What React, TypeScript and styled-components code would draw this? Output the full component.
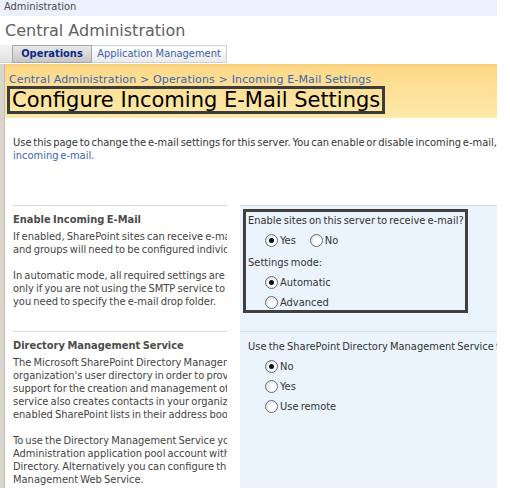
import styled, { createGlobalStyle } from 'styled-components';

const GlobalStyle = createGlobalStyle`
  body {
    margin: 0;
    background: #ffffff;
    font-family: Tahoma, "DejaVu Sans Condensed", "Liberation Sans", sans-serif;
    font-size: 11px;
    word-spacing: -1px;
    color: #333333;
  }
`;

interface RadioOption {
  label: string;
  checked: boolean;
}

const emailOptions: RadioOption[] = [
  { label: 'Yes', checked: true },
  { label: 'No', checked: false },
];

const modeOptions: RadioOption[] = [
  { label: 'Automatic', checked: true },
  { label: 'Advanced', checked: false },
];

const directoryOptions: RadioOption[] = [
  { label: 'No', checked: true },
  { label: 'Yes', checked: false },
  { label: 'Use remote', checked: false },
];

const Radio = ({ label, checked }: RadioOption) => (
  <RadioLabel>
    <RadioCircle $checked={checked} />
    <span>{label}</span>
  </RadioLabel>
);

const App = () => {
  return (
    <>
      <GlobalStyle />
      <Page>
        <TopBar>Administration</TopBar>
        <SiteTitle>Central Administration</SiteTitle>
        <TabRow>
          <TabSpacer />
          <Tab $selected $width={80}>Operations</Tab>
          <Tab $width={135}>Application Management</Tab>
        </TabRow>
        <Body>
          <LeftStrip />
          <Main>
            <PageHeader>
              <Breadcrumb>
                Central Administration &gt; Operations &gt; Incoming E-Mail Settings
              </Breadcrumb>
              <PageTitle>Configure Incoming E-Mail Settings</PageTitle>
            </PageHeader>

            <Description>
              <Line>Use this page to change the e-mail settings for this server. You can enable or disable incoming e-mail,</Line>
              <Line><Link>incoming e-mail.</Link></Line>
            </Description>

            <Section>
              <SectionInfo>
                <SectionHeading>Enable Incoming E-Mail</SectionHeading>
                <Para>
                  <Line>If enabled, SharePoint sites can receive e-mail. Lists and libraries</Line>
                  <Line>and groups will need to be configured individually.</Line>
                </Para>
                <Para>
                  <Line>In automatic mode, all required settings are retrieved. Use advanced mode</Line>
                  <Line>only if you are not using the SMTP service to receive incoming e-mail, or if</Line>
                  <Line>you need to specify the e-mail drop folder.</Line>
                </Para>
              </SectionInfo>
              <SectionControls>
                <MarkedBox>
                  <Prompt>Enable sites on this server to receive e-mail?</Prompt>
                  <RadioRow $inline>
                    {emailOptions.map((o) => (
                      <Radio key={o.label} {...o} />
                    ))}
                  </RadioRow>
                  <Prompt>Settings mode:</Prompt>
                  <RadioRow>
                    {modeOptions.map((o) => (
                      <Radio key={o.label} {...o} />
                    ))}
                  </RadioRow>
                </MarkedBox>
              </SectionControls>
            </Section>

            <Section>
              <SectionInfo>
                <SectionHeading>Directory Management Service</SectionHeading>
                <Para>
                  <Line>The Microsoft SharePoint Directory Management Service connects to your</Line>
                  <Line>organization's user directory in order to provide e-mail address features and</Line>
                  <Line>support for the creation and management of distribution groups. This</Line>
                  <Line>service also creates contacts in your organization's directory so users can find</Line>
                  <Line>enabled SharePoint lists in their address book.</Line>
                </Para>
                <Para>
                  <Line>To use the Directory Management Service you need to provide the Central</Line>
                  <Line>Administration application pool account with write access to the Active</Line>
                  <Line>Directory. Alternatively you can configure this server to use a remote Directory</Line>
                  <Line>Management Web Service.</Line>
                </Para>
              </SectionInfo>
              <SectionControls $open>
                <Prompt>Use the SharePoint Directory Management Service to create distribution groups and contacts?</Prompt>
                <RadioRow>
                  {directoryOptions.map((o) => (
                    <Radio key={o.label} {...o} />
                  ))}
                </RadioRow>
              </SectionControls>
            </Section>
          </Main>
        </Body>
      </Page>
    </>
  );
};

export default App;

const Page = styled.div`
  width: 497px;
  height: 488px;
  overflow: hidden;
  display: flex;
  flex-direction: column;
`;

const TopBar = styled.div`
  height: 16px;
  line-height: 13px;
  padding-left: 4px;
  background: #eaf0fc;
  color: #4c4c4c;
  flex-shrink: 0;
`;

const SiteTitle = styled.div`
  height: 29px;
  line-height: 30px;
  padding-left: 5px;
  font-family: "DejaVu Sans", Verdana, sans-serif;
  font-size: 16px;
  word-spacing: normal;
  color: #606060;
  flex-shrink: 0;
  white-space: nowrap;
`;

const TabRow = styled.div`
  display: flex;
  height: 19px;
  flex-shrink: 0;
`;

const TabSpacer = styled.div`
  width: 12px;
  height: 17px;
  background: linear-gradient(#f3f3f3, #e2e2e2);
  border-bottom: 1px solid #d0d0d0;
`;

const Tab = styled.div<{ $selected?: boolean; $width: number }>`
  box-sizing: border-box;
  width: ${(p) => p.$width}px;
  height: 18px;
  line-height: 16px;
  border: 1px solid ${(p) => (p.$selected ? '#a6a6a6' : '#cfcfcf')};
  border-left-width: ${(p) => (p.$selected ? '1px' : '0')};
  background: ${(p) =>
    p.$selected
      ? 'linear-gradient(#e8e8e8, #c9c7c2)'
      : 'linear-gradient(#ffffff, #ebebeb)'};
  color: ${(p) => (p.$selected ? '#0a2b8c' : '#3a62ad')};
  font-weight: ${(p) => (p.$selected ? 'bold' : 'normal')};
  word-spacing: normal;
  text-align: center;
  white-space: nowrap;
  overflow: hidden;
`;

const Body = styled.div`
  display: flex;
  flex: 1;
`;

const LeftStrip = styled.div`
  width: 4px;
  background: #d9d5cd;
  border-right: 1px solid #c2bdb3;
  flex-shrink: 0;
`;

const Main = styled.div`
  flex: 1;
  display: flex;
  flex-direction: column;
`;

const PageHeader = styled.div`
  height: 54px;
  padding: 9px 0 0 2px;
  box-sizing: border-box;
  background: linear-gradient(#f6cf7c, #fdda8a 12%, #fee9ab);
`;

const Breadcrumb = styled.div`
  font-family: "DejaVu Sans", Verdana, sans-serif;
  font-size: 11px;
  letter-spacing: 0.15px;
  word-spacing: normal;
  line-height: 13px;
  color: #3a64b8;
  padding-left: 2px;
  white-space: nowrap;
`;

const PageTitle = styled.div`
  display: inline-block;
  border: 3px solid #3c3c3c;
  padding: 0 2px;
  height: 22px;
  line-height: 23px;
  font-family: "DejaVu Sans", Verdana, sans-serif;
  font-size: 21px;
  word-spacing: normal;
  color: #000000;
  white-space: nowrap;
`;

const Description = styled.div`
  padding: 18px 0 0 8px;
  height: 87px;
  box-sizing: border-box;
  word-spacing: -1.3px;
`;

const Line = styled.div`
  white-space: nowrap;
  line-height: 13px;
`;

const Link = styled.span`
  color: #3a64b8;
`;

const Section = styled.div`
  display: grid;
  grid-template-columns: 222px 1fr;
  height: 126px;
  flex-shrink: 0;
  &:last-child {
    flex: 1;
  }
`;

const SectionInfo = styled.div`
  margin-left: 8px;
  border-top: 1px solid #d8d8d8;
  padding-top: 7px;
  overflow: hidden;
`;

const SectionHeading = styled.div`
  font-weight: bold;
  color: #4c4c4c;
  line-height: 13px;
  margin-bottom: 4px;
`;

const Para = styled.div`
  margin-bottom: 13px;
  color: #444444;
`;

const SectionControls = styled.div<{ $open?: boolean }>`
  margin-left: 13px;
  border-top: 1px solid #dcdcdc;
  background: #ebf3fd;
  padding: ${(p) => (p.$open ? '8px 0 0 8px' : '3px 0 0 3px')};
  overflow: hidden;
`;

const MarkedBox = styled.div`
  width: 217px;
  border: 3px solid #404040;
  padding: 2px 0 1px 2px;
`;

const Prompt = styled.div`
  white-space: nowrap;
  line-height: 13px;
  color: #333333;
`;

const RadioRow = styled.div<{ $inline?: boolean }>`
  display: flex;
  flex-direction: ${(p) => (p.$inline ? 'row' : 'column')};
  gap: ${(p) => (p.$inline ? '14px' : '7px')};
  padding: 7px 0 9px 17px;
  &:last-child {
    padding-bottom: 0;
  }
`;

const RadioLabel = styled.label`
  display: flex;
  align-items: center;
  gap: 2px;
  height: 13px;
  line-height: 13px;
  color: #333333;
`;

const RadioCircle = styled.span<{ $checked: boolean }>`
  position: relative;
  flex-shrink: 0;
  width: 11px;
  height: 11px;
  border-radius: 50%;
  border: 1px solid #5d6e82;
  background: radial-gradient(circle at 65% 65%, #ffffff 30%, #d6d6d0 100%);
  &::after {
    content: '';
    display: ${(p) => (p.$checked ? 'block' : 'none')};
    position: absolute;
    left: 3px;
    top: 3px;
    width: 5px;
    height: 5px;
    border-radius: 50%;
    background: #111111;
  }
`;
